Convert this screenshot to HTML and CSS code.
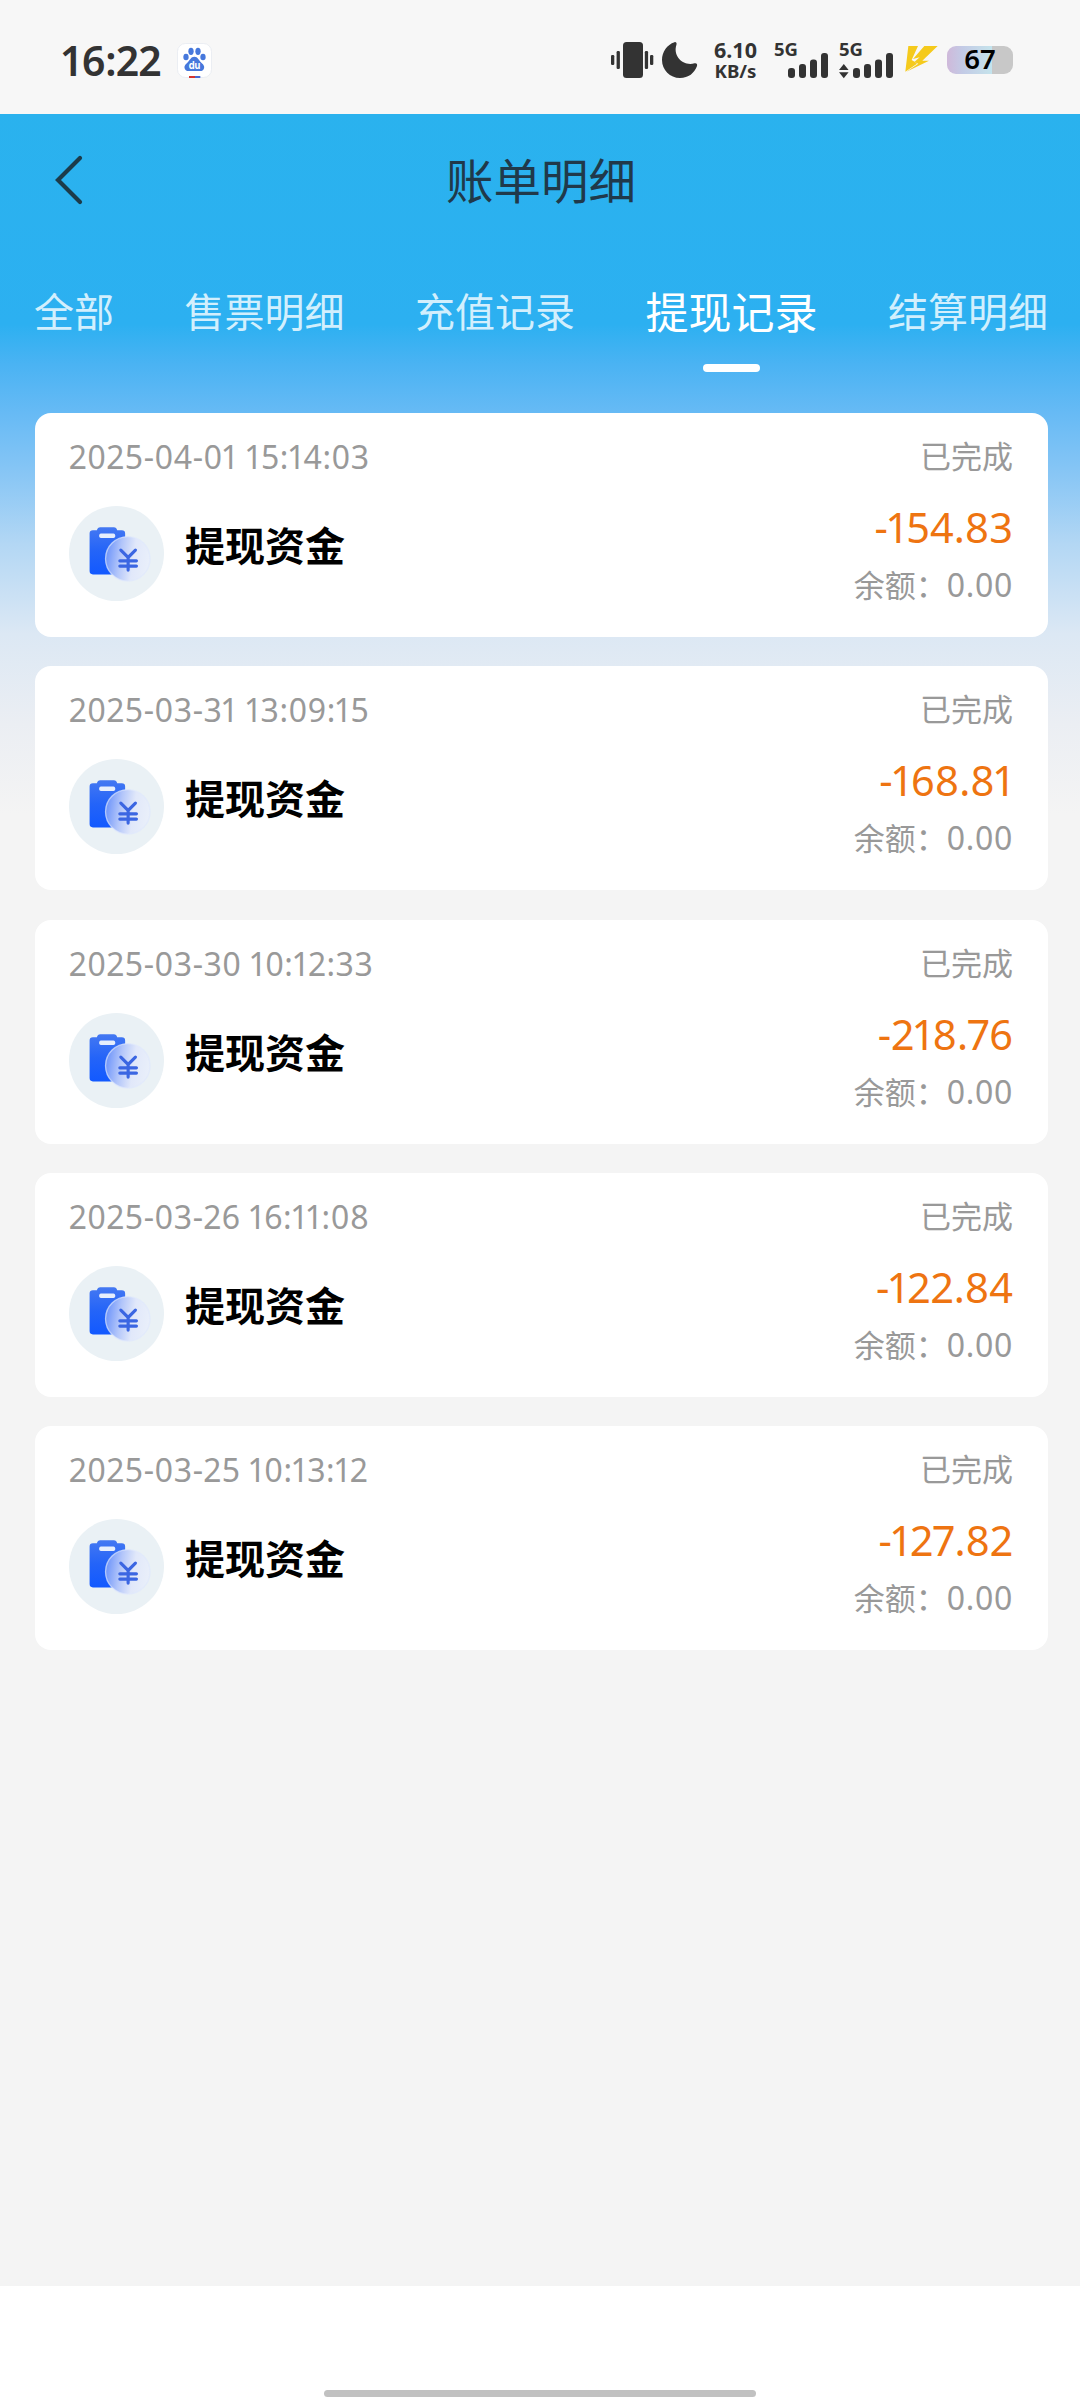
FILE: index.html
```html
<!DOCTYPE html>
<html lang="zh-CN">
<head>
<meta charset="utf-8">
<title>账单明细</title>
<link rel="stylesheet" href="styles.css">
</head>
<body>
<svg class="defs" aria-hidden="true">
  <defs>
    <linearGradient id="board" x1="0" y1="0" x2="0" y2="1">
      <stop offset="0" stop-color="#4478f2"/><stop offset=".5" stop-color="#2464f8"/><stop offset="1" stop-color="#1259ff"/>
    </linearGradient>
    <linearGradient id="coin" x1="0" y1=".6" x2="1" y2=".75">
      <stop offset="0" stop-color="#7398fa"/><stop offset=".3" stop-color="#b3c6fa"/><stop offset=".6" stop-color="#e1e8fa"/><stop offset="1" stop-color="#eaf0fa"/>
    </linearGradient>
  </defs>
  <symbol id="withdraw" viewBox="27 47 286 286">
    <circle cx="170" cy="190" r="143" fill="#eaf1f5"/>
    <path d="M99 120h12q2-9 10-9h41q8 0 10 9h14q10 0 10 10v113q0 10-10 10H99q-10 0-10-10V130q0-10 10-10z" fill="url(#board)"/>
    <rect x="118" y="130" width="48" height="13" rx="5" fill="#e6eefc"/>
    <circle cx="204" cy="206" r="67" fill="url(#coin)" stroke="#dfe8fc" stroke-opacity=".7" stroke-width="4"/>
    <path d="M183 180l22 22 22-22M205 202v38M180 212h50M180 228h50" fill="none" stroke="#3b66e2" stroke-width="9.500" stroke-linecap="round"/>
  </symbol>
</svg>

<div class="status-bar">
  <div class="clock">16:22</div>
  <svg class="app-badge" viewBox="0 0 105 105">
    <rect x="1.5" y="1.5" width="102" height="102" rx="24" fill="#fff" stroke="#e3e7ee" stroke-width="2"/>
    <g fill="#4678dc">
      <ellipse cx="42" cy="25" rx="8" ry="11"/><ellipse cx="63" cy="25" rx="8" ry="11"/>
      <ellipse cx="27" cy="42" rx="8" ry="10"/><ellipse cx="78" cy="42" rx="8" ry="10"/>
      <path d="M52 41c11 0 13 11 21 18 9 7 11 14 6 21-5 6-14 4-27 4s-22 2-27-4c-5-7-3-14 6-21 8-7 10-18 21-18z"/>
    </g>
    <text class="badge-text" x="35" y="78" textLength="35" lengthAdjust="spacingAndGlyphs">du</text>
    <rect x="36" y="99" width="18" height="6" fill="#d5342d"/><rect x="54" y="99" width="16" height="6" fill="#466ad2"/>
  </svg>
  <svg class="indicators" viewBox="0 -10 336 60">
    <g fill="#333">
      <rect x="12" y="2" width="20" height="36" rx="3.5"/>
      <rect x="0" y="15" width="3.3" height="10" rx="1.2"/><rect x="5.6" y="11" width="3.3" height="18" rx="1.2"/>
      <rect x="33.8" y="11" width="3.3" height="18" rx="1.2"/><rect x="39" y="15" width="3.3" height="10" rx="1.2"/>
      <path d="M63.5 2.2C56 4.500 51 12 51 20c0 10 8 18 18 18 8.500 0 14.500-5 17-12 .7-2-.7-3.300-2.500-2.700C72 26.500 61.500 16 65.500 4.500c.5-1.500-.6-2.700-2-2.300z"/>
      <text class="net" x="103" y="17.500" font-size="20.500" textLength="43" lengthAdjust="spacingAndGlyphs">6.10</text>
      <text class="net" x="103.500" y="38" font-size="17.500" textLength="42" lengthAdjust="spacingAndGlyphs">KB/s</text>
      <text class="net" x="163" y="15.500" font-size="18" textLength="24" lengthAdjust="spacingAndGlyphs">5G</text>
      <rect x="177" y="28" width="7" height="10" rx="3"/><rect x="188" y="24" width="7" height="14" rx="3"/>
      <rect x="199" y="19.500" width="7" height="18.500" rx="3"/><rect x="210" y="13" width="7" height="25" rx="3"/>
      <text class="net" x="228" y="15.500" font-size="18" textLength="24" lengthAdjust="spacingAndGlyphs">5G</text>
      <path d="M228 30l4.800-6 4.800 6zM228 32.300h9.600l-4.800 6z"/>
      <rect x="242" y="28" width="7" height="10" rx="3"/><rect x="253" y="24" width="7" height="14" rx="3"/>
      <rect x="264" y="19.500" width="7" height="18.500" rx="3"/><rect x="275" y="13" width="7" height="25" rx="3"/>
    </g>
    <g transform="translate(284 -4) scale(.3333)" fill="#f5ca1c">
      <path d="M40 30H69L50 72 60 78 66 83 31 107z"/>
      <path d="M88 30H128L82 74H102L34 107 70 83 58 78 74 64 54 69z"/>
    </g>
  </svg>
  <div class="battery">67</div>
</div>

<main class="app">
  <header class="nav">
    <svg class="back" viewBox="0 0 28 50"><path d="M25 3L3 25l22 22" fill="none" stroke="#1c3b4a" stroke-width="4.200" stroke-linecap="round"/></svg>
    <h1 class="title">账单明细</h1>
  </header>
  <nav class="tabs">
    <span class="tab">全部</span>
    <span class="tab">售票明细</span>
    <span class="tab">充值记录</span>
    <span class="tab tab-active">提现记录</span>
    <span class="tab">结算明细</span>
  </nav>
  <section class="list">
    <article class="card">
      <div class="meta"><time class="date">2025-04-01 15:14:03</time><span>已完成</span></div>
      <div class="entry"><svg class="icon"><use href="#withdraw"/></svg><strong class="name">提现资金</strong>
        <div class="sums"><span class="amount">-154.83</span><span class="balance">余额：<span class="value">0.00</span></span></div></div>
    </article>
    <article class="card">
      <div class="meta"><time class="date">2025-03-31 13:09:15</time><span>已完成</span></div>
      <div class="entry"><svg class="icon"><use href="#withdraw"/></svg><strong class="name">提现资金</strong>
        <div class="sums"><span class="amount">-168.81</span><span class="balance">余额：<span class="value">0.00</span></span></div></div>
    </article>
    <article class="card">
      <div class="meta"><time class="date">2025-03-30 10:12:33</time><span>已完成</span></div>
      <div class="entry"><svg class="icon"><use href="#withdraw"/></svg><strong class="name">提现资金</strong>
        <div class="sums"><span class="amount">-218.76</span><span class="balance">余额：<span class="value">0.00</span></span></div></div>
    </article>
    <article class="card">
      <div class="meta"><time class="date">2025-03-26 16:11:08</time><span>已完成</span></div>
      <div class="entry"><svg class="icon"><use href="#withdraw"/></svg><strong class="name">提现资金</strong>
        <div class="sums"><span class="amount">-122.84</span><span class="balance">余额：<span class="value">0.00</span></span></div></div>
    </article>
    <article class="card">
      <div class="meta"><time class="date">2025-03-25 10:13:12</time><span>已完成</span></div>
      <div class="entry"><svg class="icon"><use href="#withdraw"/></svg><strong class="name">提现资金</strong>
        <div class="sums"><span class="amount">-127.82</span><span class="balance">余额：<span class="value">0.00</span></span></div></div>
    </article>
  </section>
</main>
<footer class="home"><div class="home-bar"></div></footer>
</body>
</html>
```
FILE: styles.css
```css
* { box-sizing: border-box; }
body {
  margin: 0;
  width: 1080px;
  height: 2400px;
  display: flex;
  flex-direction: column;
  overflow: hidden;
  background: #fff;
  font-family: "Noto Sans", "Noto Sans CJK SC", sans-serif;
}
.defs { position: absolute; width: 0; height: 0; }

.status-bar {
  height: 114px;
  flex: none;
  display: flex;
  align-items: center;
  padding: 6px 67px 0 62px;
  background: #f7f7f7;
  color: #333;
}
.clock {
  width: 115px;
  font: 600 41px/60px "Noto Sans", sans-serif;
  font-variant-numeric: proportional-nums;
  letter-spacing: -0.5px;
}
.app-badge { width: 35px; height: 35px; }
.badge-text { font: 700 32px "Inter", sans-serif; fill: #fff; }
.indicators { width: 336px; height: 60px; margin-left: auto; flex: none; }
.net { font-family: "Noto Sans", sans-serif; font-weight: 700; }
.battery {
  width: 66px;
  height: 28px;
  flex: none;
  border-radius: 9px;
  background: linear-gradient(90deg, #cfb9da 0, #c3cbe6 16px, #c5dfea 40px, #c3e4ee 45px, #c8c8c8 45px);
  color: #000;
  font: 600 27.500px/26px "Noto Sans", sans-serif;
  text-align: center;
}

.app {
  height: 2172px;
  flex: none;
  background: linear-gradient(180deg, #2ab2ee 0, #2cb0f1 210px, #4ab3f3 250px, #66baf5 298px, #88c6f5 360px, #b3d7f4 430px, #dce8f4 520px, #ebeef3 610px, #f4f4f4 700px);
}
.nav { height: 132px; display: flex; align-items: center; padding: 0 55px; }
.back { width: 28px; height: 50px; }
.title {
  flex: 1;
  margin: 0 26px 3px 0;
  text-align: center;
  color: #20394a;
  font: 400 47.500px/70px "Noto Sans CJK SC", sans-serif;
}
.tabs { height: 167px; display: flex; align-items: flex-start; justify-content: space-between; padding: 33px 32px 0 34px; }
.tab { font: 400 40px/62px "Noto Sans CJK SC", sans-serif; color: #d2effd; }
.tab-active { font-size: 43px; color: #fff; display: flex; flex-direction: column; align-items: center; }
.tab-active::after { content: ""; width: 57px; height: 8px; border-radius: 4px; background: #fff; margin-top: 23px; }

.list { display: flex; flex-direction: column; gap: 29.250px; padding: 0 32px 0 35px; }
.card { height: 224px; border-radius: 16px; background: #fff; padding: 19px 35px 0 34px; }
.meta {
  display: flex;
  justify-content: space-between;
  font: 400 31px/46px "Noto Sans CJK SC", sans-serif;
  color: #999;
}
.date {
  padding-top: 2px;
  font: 400 32px/46px "Noto Sans", sans-serif;
  font-variant-numeric: proportional-nums;
  letter-spacing: 0.55px;
}
.entry { display: flex; align-items: flex-start; margin-top: 26px; }
.icon { width: 95px; height: 95px; flex: none; }
.name { margin: 8px 0 0 21px; font: 700 40px/60px "Noto Sans CJK SC", sans-serif; color: #000; }
.sums { margin: -9px 0 0 auto; display: flex; flex-direction: column; align-items: flex-end; }
.amount { font: 400 41.500px/60px "Noto Sans", sans-serif; font-variant-numeric: proportional-nums; color: #ee7411; }
.balance { margin-top: -1px; font: 400 31px/56px "Noto Sans CJK SC", sans-serif; color: #999; }
.value { font: 400 32px/56px "Noto Sans", sans-serif; letter-spacing: 0.7px; }

.home { flex: 1; display: flex; align-items: flex-end; justify-content: center; padding-bottom: 3px; background: #fff; }
.home-bar { width: 432px; height: 7px; border-radius: 4px; background: #c1c1c1; }
```
